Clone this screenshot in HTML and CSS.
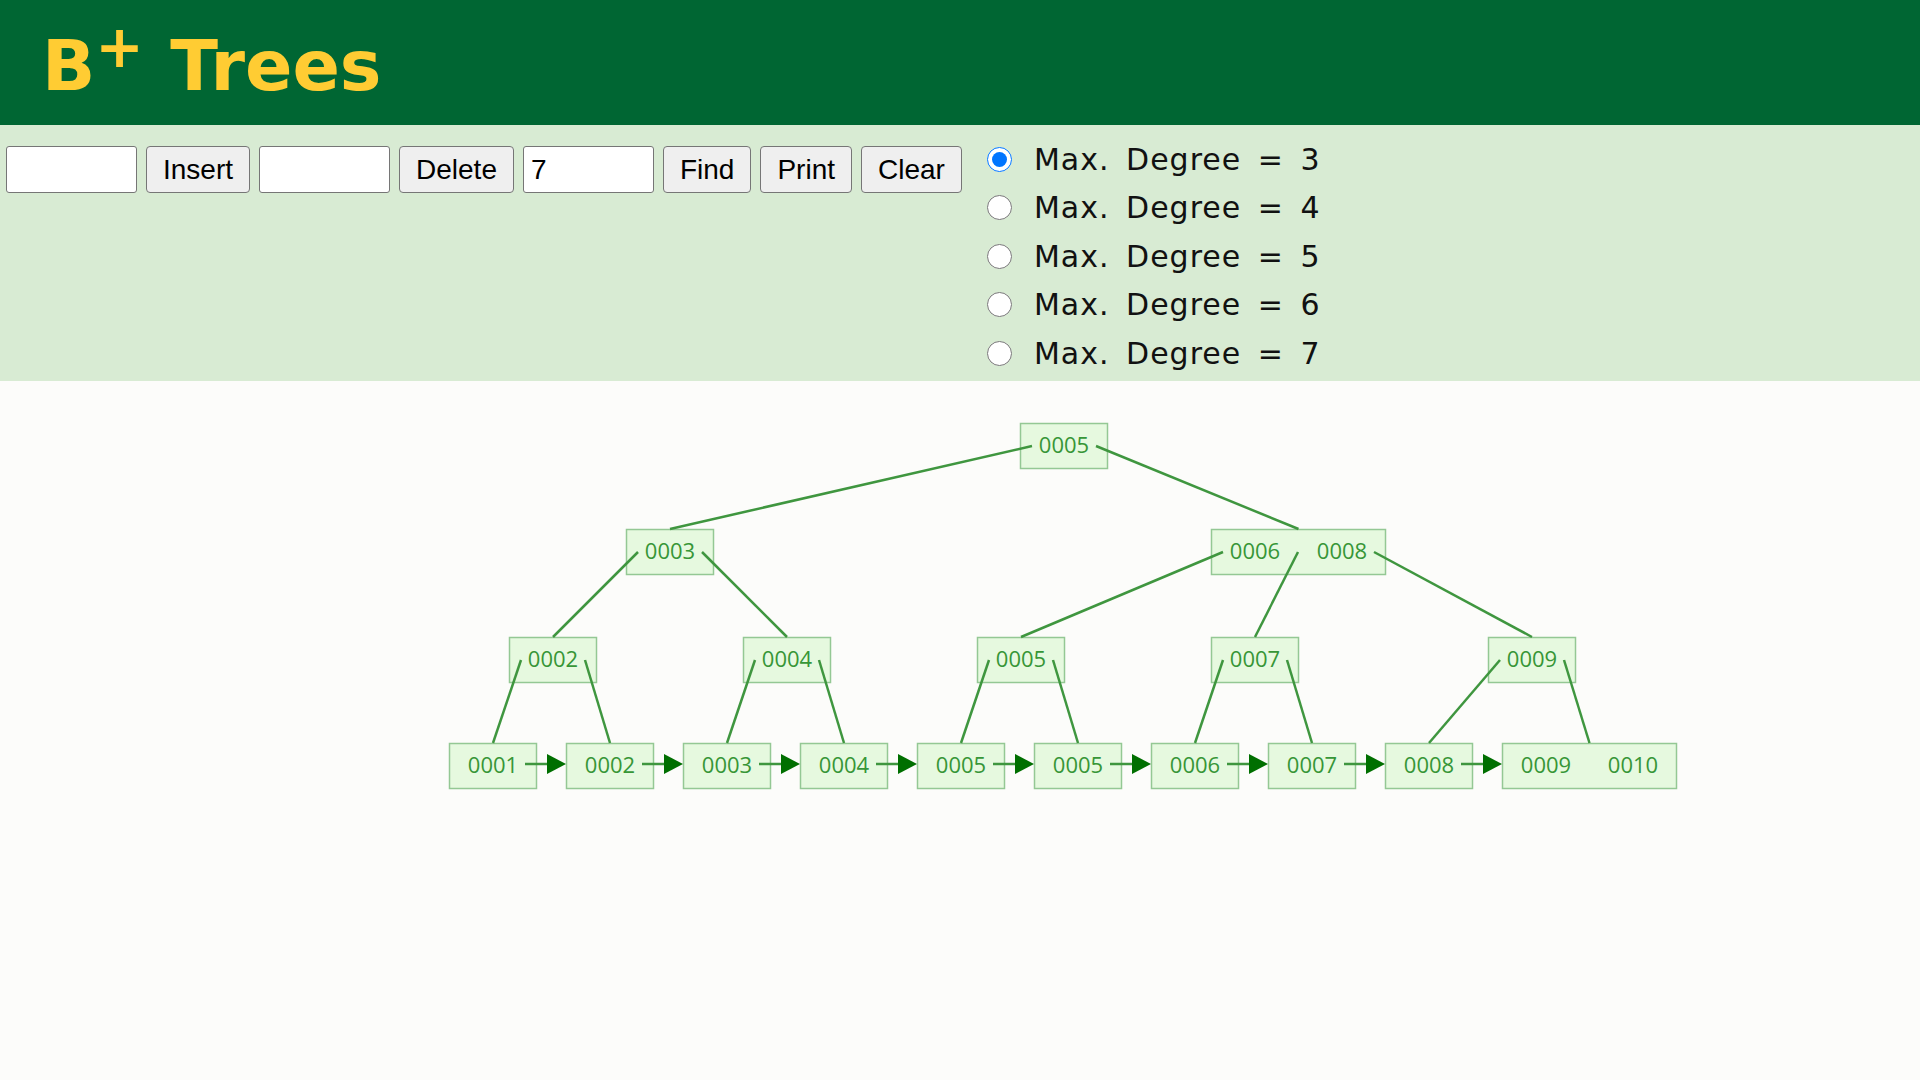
FILE: index.html
```html
<!DOCTYPE html>
<html lang="en">
<head>
    <meta charset="UTF-8">
    <title>B+ Trees</title>
    <link rel="stylesheet" href="styles.css">
</head>
<body>
    <header class="top">
        <h1 class="title">B<sup>+</sup> Trees</h1>
    </header>

    <section class="controls">
        <div class="actions">
            <input class="field" type="text">
            <button class="btn">Insert</button>
            <input class="field" type="text">
            <button class="btn">Delete</button>
            <input class="field" type="text" value="7">
            <button class="btn">Find</button>
            <button class="btn">Print</button>
            <button class="btn">Clear</button>
        </div>
        <div class="degrees">
            <label class="degree"><input type="radio" name="deg" value="3" checked>Max. Degree = 3</label>
            <label class="degree"><input type="radio" name="deg" value="4">Max. Degree = 4</label>
            <label class="degree"><input type="radio" name="deg" value="5">Max. Degree = 5</label>
            <label class="degree"><input type="radio" name="deg" value="6">Max. Degree = 6</label>
            <label class="degree"><input type="radio" name="deg" value="7">Max. Degree = 7</label>
        </div>
    </section>

    <main class="canvas">
        <svg id="tree" width="1920" height="699" viewBox="0 381 1920 699"></svg>
    </main>

    <script>
        const NS = "http://www.w3.org/2000/svg";
        const svg = document.getElementById("tree");
        const CELL = 87, H = 46;

        const nodes = {
            root: { x: 1020, y: 423, keys: ["0005"], kids: ["n3", "n68"] },
            n3:   { x: 626,  y: 529, keys: ["0003"], kids: ["n2", "n4"] },
            n68:  { x: 1211, y: 529, keys: ["0006", "0008"], kids: ["n5", "n7", "n9"] },
            n2:   { x: 509,  y: 637, keys: ["0002"], kids: ["l0", "l1"] },
            n4:   { x: 743,  y: 637, keys: ["0004"], kids: ["l2", "l3"] },
            n5:   { x: 977,  y: 637, keys: ["0005"], kids: ["l4", "l5"] },
            n7:   { x: 1211, y: 637, keys: ["0007"], kids: ["l6", "l7"] },
            n9:   { x: 1488, y: 637, keys: ["0009"], kids: ["l8", "l9"] }
        };

        const leafKeys = [["0001"], ["0002"], ["0003"], ["0004"], ["0005"], ["0005"],
                          ["0006"], ["0007"], ["0008"], ["0009", "0010"]];
        leafKeys.forEach((keys, i) => {
            nodes["l" + i] = { x: 449 + i * 117, y: 743, keys: keys, kids: [], leaf: true };
        });

        function el(tag, attrs, cls) {
            const e = document.createElementNS(NS, tag);
            for (const k in attrs) e.setAttribute(k, attrs[k]);
            if (cls) e.setAttribute("class", cls);
            svg.appendChild(e);
            return e;
        }

        const width = n => n.keys.length * CELL + 1;

        function pointerX(n, i) {
            if (i === 0) return n.x + 12;
            if (i === n.keys.length) return n.x + width(n) - 12;
            return n.x + i * CELL;
        }

        // boxes and keys
        Object.values(nodes).forEach(n => {
            el("rect", { x: n.x + 0.5, y: n.y + 0.5, width: width(n) - 1, height: H - 1 }, "box");
            n.keys.forEach((k, i) => {
                const t = el("text", { x: n.x + i * CELL + CELL / 2 + 0.5, y: n.y + H / 2 + 7 }, "key");
                t.textContent = k;
            });
        });

        // child links
        Object.values(nodes).forEach(n => {
            n.kids.forEach((id, i) => {
                const c = nodes[id];
                el("line", {
                    x1: pointerX(n, i), y1: n.y + H / 2,
                    x2: c.x + width(c) / 2, y2: c.y
                }, "edge");
            });
        });

        // leaf chain
        for (let i = 0; i < leafKeys.length - 1; i++) {
            const a = nodes["l" + i], b = nodes["l" + (i + 1)];
            const y = a.y + 21;
            const tip = b.x;
            el("line", { x1: a.x + width(a) - 12, y1: y, x2: tip - 16, y2: y }, "edge");
            el("polygon", { points: `${tip - 19},${y - 10} ${tip},${y} ${tip - 19},${y + 10}` }, "arrow");
        }
    </script>
</body>
</html>
```

FILE: styles.css
```css
body {
    margin: 0;
    padding: 0;
    font-family: 'Liberation Sans', Arial, sans-serif;
    background: #fcfcfa;
}

.top {
    background: #006633;
    height: 125px;
    box-sizing: border-box;
    padding: 11px 0 0 42px;
}

.title {
    margin: 0;
    font-family: 'DejaVu Sans', Verdana, sans-serif;
    font-weight: bold;
    font-size: 70px;
    line-height: 110px;
    color: #ffcc33;
}

.title sup {
    font-size: 58px;
    line-height: 0;
    vertical-align: 23px;
    margin-right: 2px;
}

.controls {
    background: #d8ebd3;
    height: 256px;
    box-sizing: border-box;
    padding: 10px 6px 0 6px;
    display: flex;
    align-items: flex-start;
    gap: 25px;
}

.actions {
    display: flex;
    gap: 9px;
    margin-top: 11px;
}

.field {
    width: 131px;
    height: 47px;
    box-sizing: border-box;
    margin: 0;
    padding: 0 7px;
    font-family: 'Liberation Sans', Arial, sans-serif;
    font-size: 28px;
    color: #000;
    background: #fff;
    border: 1px solid #767676;
    border-radius: 3px;
}

.btn {
    height: 47px;
    box-sizing: border-box;
    margin: 0;
    padding: 0 16px;
    font-family: 'Liberation Sans', Arial, sans-serif;
    font-size: 28px;
    color: #000;
    background: #efefef;
    border: 1px solid #767676;
    border-radius: 4px;
    cursor: pointer;
}

.btn:hover {
    background: #e5e5e5;
}

.degrees {
    display: flex;
    flex-direction: column;
}

.degree {
    display: flex;
    align-items: center;
    height: 48.5px;
    font-family: 'DejaVu Sans', Verdana, sans-serif;
    font-size: 30px;
    letter-spacing: 1px;
    word-spacing: 6px;
    color: #111;
}

.degree input {
    width: 25px;
    height: 25px;
    margin: 0 22px 0 0;
}

.canvas {
    height: 699px;
}

#tree {
    display: block;
}

.box {
    fill: #e6f9df;
    stroke: #94c894;
    stroke-width: 1.5;
}

.key {
    font-family: 'Open Sans', 'Liberation Sans', sans-serif;
    font-size: 22px;
    fill: #379637;
    text-anchor: middle;
}

.edge {
    stroke: #3f963f;
    stroke-width: 2.5;
}

.arrow {
    fill: #006f00;
}
```
